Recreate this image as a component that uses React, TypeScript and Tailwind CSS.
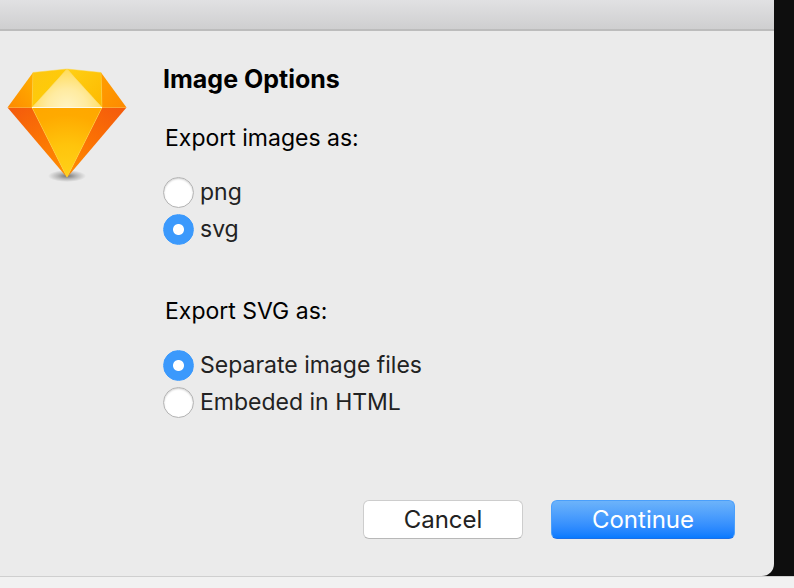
import { useState } from 'react';

type RadioProps = {
  name: string;
  label: string;
  checked: boolean;
  onChange: () => void;
};

function Radio({ name, label, checked, onChange }: RadioProps) {
  return (
    <label className="flex h-[37px] items-center gap-1.5 text-[#222222]">
      <input
        type="radio"
        name={name}
        checked={checked}
        onChange={onChange}
        className="h-[31px] w-[31px] shrink-0 appearance-none rounded-full border border-[#b4b4b4] bg-white shadow-[inset_0_1px_2px_#00000033] checked:border-[#3b99fc] checked:bg-[radial-gradient(circle,#ffffff_5px,#3b99fc_6px)] checked:shadow-none"
      />
      <span>{label}</span>
    </label>
  );
}

type RadioGroupProps = {
  title: string;
  name: string;
  options: string[];
  initial: string;
};

function RadioGroup({ title, name, options, initial }: RadioGroupProps) {
  const [value, setValue] = useState(initial);

  return (
    <fieldset>
      <legend className="mb-5 ml-[2px] leading-8 text-black">{title}</legend>
      {options.map((option) => (
        <Radio
          key={option}
          name={name}
          label={option}
          checked={value === option}
          onChange={() => setValue(option)}
        />
      ))}
    </fieldset>
  );
}

function DiamondLogo() {
  return (
    <svg viewBox="0 0 120 116" className="h-[116px] w-[120px]" aria-hidden="true">
      <defs>
        <radialGradient id="shadow">
          <stop offset="0" stopColor="#000" stopOpacity="0.5" />
          <stop offset="0.5" stopColor="#000" stopOpacity="0.22" />
          <stop offset="1" stopColor="#000" stopOpacity="0" />
        </radialGradient>
        <radialGradient id="center" gradientUnits="userSpaceOnUse" cx="60" cy="112" r="85">
          <stop offset="0" stopColor="#ffd21a" />
          <stop offset="0.4" stopColor="#ffc40c" />
          <stop offset="0.75" stopColor="#ffaa00" />
          <stop offset="1" stopColor="#ffa500" />
        </radialGradient>
        <linearGradient id="left" gradientUnits="userSpaceOnUse" x1="10" y1="40" x2="58" y2="105">
          <stop offset="0" stopColor="#f45c0c" />
          <stop offset="0.5" stopColor="#fb7404" />
          <stop offset="1" stopColor="#ff8c00" />
        </linearGradient>
        <linearGradient id="right" gradientUnits="userSpaceOnUse" x1="110" y1="40" x2="62" y2="105">
          <stop offset="0" stopColor="#f45c0c" />
          <stop offset="0.5" stopColor="#fb7004" />
          <stop offset="1" stopColor="#ff8c00" />
        </linearGradient>
        <linearGradient id="sideTopLeft" x1="1" y1="0" x2="0" y2="1">
          <stop offset="0" stopColor="#ffb000" />
          <stop offset="1" stopColor="#fd8a00" />
        </linearGradient>
        <linearGradient id="sideTopRight" x1="0" y1="0" x2="1" y2="1">
          <stop offset="0" stopColor="#ff9e00" />
          <stop offset="1" stopColor="#fd8a00" />
        </linearGradient>
        <linearGradient id="topLeft" x1="0" y1="0" x2="1" y2="1">
          <stop offset="0" stopColor="#fdc512" />
          <stop offset="1" stopColor="#ffd000" />
        </linearGradient>
        <linearGradient id="topRight" x1="0" y1="0" x2="1" y2="1">
          <stop offset="0" stopColor="#ffd014" />
          <stop offset="1" stopColor="#fdb900" />
        </linearGradient>
        <radialGradient id="crown" gradientUnits="userSpaceOnUse" cx="60" cy="42" r="40">
          <stop offset="0" stopColor="#fff4c4" />
          <stop offset="0.5" stopColor="#ffeba0" />
          <stop offset="1" stopColor="#ffdb58" />
        </radialGradient>
      </defs>
      <ellipse cx="60" cy="109" rx="19" ry="6" fill="url(#shadow)" />
      <path d="M0.5 40.5 25 40.5 60 110.5Z" fill="url(#left)" />
      <path d="M119.5 40.5 95 40.5 60 110.5Z" fill="url(#right)" />
      <path d="M25 40.5 95 40.5 60 110.5Z" fill="url(#center)" />
      <path d="M26 5.5 0.5 40.5 25 40.5Z" fill="url(#sideTopLeft)" />
      <path d="M94 5.5 119.5 40.5 95 40.5Z" fill="url(#sideTopRight)" />
      <path d="M26 5.5 60 2 25 40.5Z" fill="url(#topLeft)" />
      <path d="M94 5.5 60 2 95 40.5Z" fill="url(#topRight)" />
      <path d="M60 2 95 40.5 25 40.5Z" fill="url(#crown)" />
      <g fill="none" stroke="#ffd43a" strokeWidth="1" strokeOpacity="0.5">
        <path d="M60 2 25 40.5 60 110 95 40.5Z" />
        <path d="M26 5.5 25 40.5M94 5.5 95 40.5M26 5.5 60 2 94 5.5" />
        <path d="M1 40.5H119" stroke="#ffb52a" />
      </g>
      <path d="M25 40.5H95" stroke="#fffbe8" strokeWidth="1" />
    </svg>
  );
}

export default function App() {
  return (
    <div className="flex min-h-screen flex-col bg-[#f1f1f1] font-['Inter','Liberation_Sans',sans-serif] text-[23px]">
      <div className="flex flex-1 flex-col bg-[#0e0e0e] pr-5">
        <main className="flex flex-1 flex-col rounded-br-xl bg-[#ebebeb]">
          <header className="h-[31px] border-b-2 border-[#bcbcbc] bg-linear-to-b from-[#e1e1e3] to-[#cfcfd0]" />
          <form
            className="flex flex-1 flex-col justify-between pt-8 pr-[39px] pb-[37px] pl-[7px]"
            onSubmit={(e) => e.preventDefault()}
          >
            <div className="flex gap-9">
              <div className="shrink-0 pt-1">
                <DiamondLogo />
              </div>
              <div>
                <h1 className="mb-[27px] text-[25px] leading-8 font-bold text-black">
                  Image Options
                </h1>
                <div className="flex flex-col gap-[47px]">
                  <RadioGroup
                    title="Export images as:"
                    name="format"
                    options={['png', 'svg']}
                    initial="svg"
                  />
                  <RadioGroup
                    title="Export SVG as:"
                    name="svg-mode"
                    options={['Separate image files', 'Embeded in HTML']}
                    initial="Separate image files"
                  />
                </div>
              </div>
            </div>
            <div className="flex justify-end gap-7 text-2xl">
              <button
                type="button"
                className="h-[39px] w-[160px] rounded-md border border-[#cdcdcd] border-b-[#b8b8b8] bg-white text-[#222222]"
              >
                Cancel
              </button>
              <button
                type="submit"
                className="h-[39px] w-[184px] rounded-md border border-[#4a9ffb] border-b-[#1c6fe8] bg-linear-to-b from-[#6cb3fa] to-[#067aff] text-white"
              >
                Continue
              </button>
            </div>
          </form>
        </main>
      </div>
      <footer className="h-3 border-t border-[#cfcfcf]" />
    </div>
  );
}
